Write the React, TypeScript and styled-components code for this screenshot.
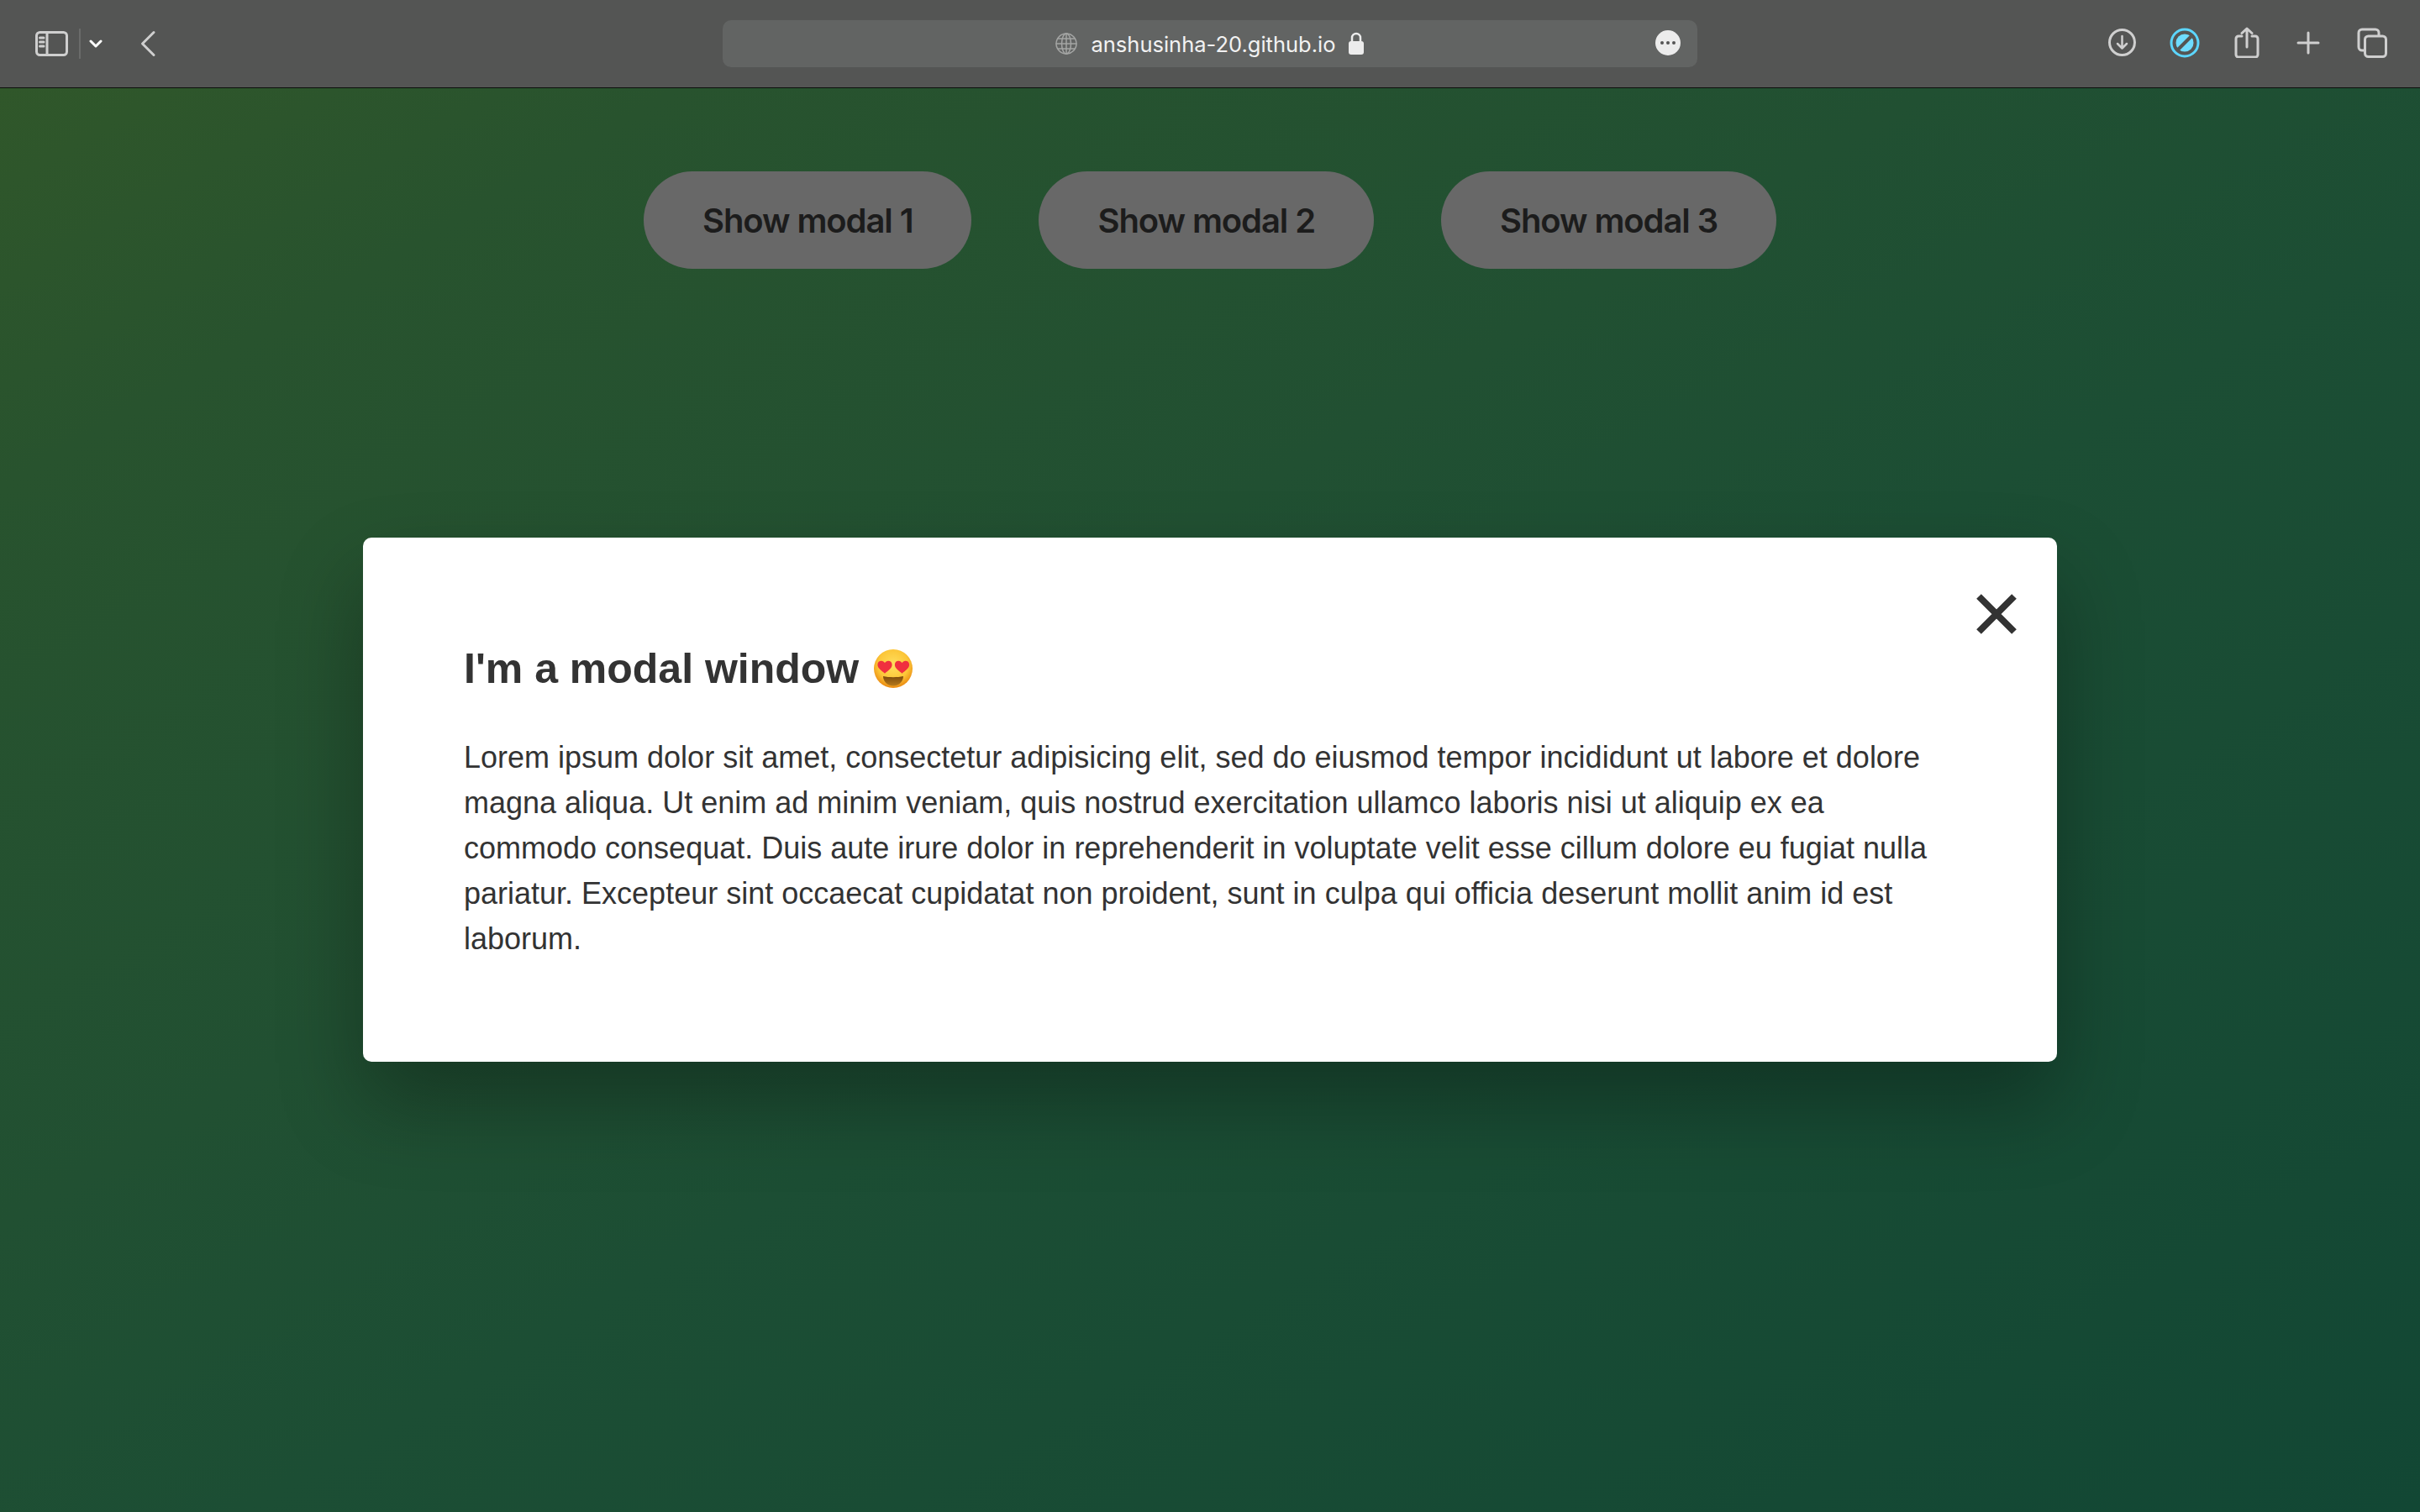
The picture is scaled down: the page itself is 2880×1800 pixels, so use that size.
import React from 'react';
import styled, { createGlobalStyle } from 'styled-components';

const GlobalStyle = createGlobalStyle`
  html, body {
    margin: 0;
    padding: 0;
    height: 100%;
  }
  #root {
    height: 100%;
  }
`;

const Window = styled.div`
  display: flex;
  flex-direction: column;
  width: 2880px;
  height: 1800px;
  overflow: hidden;
`;

const Toolbar = styled.header`
  display: grid;
  grid-template-columns: 1fr 1160px 1fr;
  align-items: center;
  height: 104px;
  background: #545554;
  border-bottom: 1px solid #0c0f0c;
  flex: none;
`;

const LeftTools = styled.div`
  display: flex;
  align-items: center;
  padding-left: 42px;
`;

const RightTools = styled.div`
  display: flex;
  align-items: center;
  justify-content: flex-end;
  gap: 42px;
  padding: 0 39px 3px 0;
`;

const ToolIcon = styled.svg<{ $stroke?: string; $weight?: number; $left?: number }>`
  display: block;
  flex: none;
  fill: none;
  margin-left: ${p => p.$left || 0}px;
  stroke: ${p => p.$stroke || '#cfcfcf'};
  stroke-width: ${p => p.$weight || 3};
  stroke-linecap: round;
  stroke-linejoin: round;
`;

const Divider = styled.span`
  width: 2px;
  height: 36px;
  margin: 0 10px 0 13px;
  background: #6a6b6a;
`;

const AddressBar = styled.div`
  position: relative;
  display: flex;
  align-items: center;
  justify-content: center;
  height: 56px;
  border-radius: 10px;
  background: #626463;
`;

const Url = styled.span`
  margin: 0 14px 0 16px;
  font-family: Inter, "Liberation Sans", sans-serif;
  font-size: 25.5px;
  font-weight: 400;
  color: #f2f2f2;
`;

const MoreBadge = styled.span`
  position: absolute;
  right: 20px;
  top: 12px;
  display: flex;
  align-items: center;
  justify-content: center;
  gap: 3px;
  width: 30px;
  height: 30px;
  border-radius: 50%;
  background: #ececec;
`;

const MoreDot = styled.i`
  width: 4px;
  height: 4px;
  border-radius: 50%;
  background: #555;
`;

const Page = styled.main`
  position: relative;
  flex: 1;
  display: flex;
  flex-direction: column;
  background: linear-gradient(to bottom right, #30572a 0%, #28532e 14%, #215032 40%, #1c4e34 55%, #124734 100%);
`;

const ButtonRow = styled.div`
  display: flex;
  justify-content: center;
  gap: 80px;
  padding-top: 99px;
`;

const PillButton = styled.button`
  height: 116px;
  padding: 0 70px;
  border: none;
  border-radius: 58px;
  background: #686868;
  color: #1c1c1c;
  font-family: Inter, "Liberation Sans", sans-serif;
  font-size: 40px;
  font-weight: 600;
  letter-spacing: -1.1px;
`;

const Overlay = styled.div`
  position: absolute;
  inset: 0;
  display: flex;
  align-items: center;
  justify-content: center;
  padding-bottom: 1px;
`;

const Modal = styled.section`
  position: relative;
  box-sizing: border-box;
  width: 2016px;
  height: 624px;
  padding: 126px 120px 0;
  background: #fff;
  border-radius: 10px;
  box-shadow: 0 50px 100px rgba(0, 0, 0, 0.3);
  font-family: "Liberation Sans", Arial, sans-serif;
`;

const CloseButton = styled.button`
  position: absolute;
  top: 67px;
  right: 48px;
  padding: 0;
  border: none;
  background: none;
`;

const CloseIcon = styled.svg`
  display: block;
  fill: none;
  stroke: #333;
  stroke-width: 8;
`;

const Title = styled.h2`
  display: flex;
  align-items: center;
  gap: 18px;
  margin: 0 0 49px;
  font-size: 50px;
  line-height: 60px;
  font-weight: 700;
  color: #333;
`;

const Body = styled.p`
  margin: 0;
  font-size: 36px;
  line-height: 54px;
  color: #333;
`;

function HeartEyes() {
  const heart = 'M0 -3.5c-1.6-3.6-8.2-3.2-8.2 1.8 0 4.4 5 7 8.2 10 3.2-3 8.2-5.6 8.2-10 0-5-6.6-5.4-8.2-1.8z';
  return (
    <svg width="46" height="46" viewBox="0 0 46 46">
      <defs>
        <radialGradient id="face" cx="50%" cy="40%" r="58%">
          <stop offset="0%" stopColor="#ffdf5e" />
          <stop offset="68%" stopColor="#fcc638" />
          <stop offset="100%" stopColor="#ec8f14" />
        </radialGradient>
        <linearGradient id="mouth" x1="0" y1="0" x2="0" y2="1">
          <stop offset="0%" stopColor="#7c4a0c" />
          <stop offset="100%" stopColor="#b67a1c" />
        </linearGradient>
      </defs>
      <circle cx="23" cy="23" r="23" fill="url(#face)" />
      <path d={heart} transform="translate(13 20) scale(1.05)" fill="#f0303f" />
      <path d={heart} transform="translate(33.5 20) scale(1.05)" fill="#f0303f" />
      <path d="M11 32c7 1.6 17 1.6 24 0 0 6-5 11.5-12 11.5S11 38 11 32z" fill="url(#mouth)" />
    </svg>
  );
}

export default function App() {
  return (
    <Window>
      <GlobalStyle />
      <Toolbar>
        <LeftTools>
          <ToolIcon width="39" height="30" viewBox="0 0 39 30">
            <rect x="1.5" y="1.5" width="36" height="27" rx="4" />
            <path d="M14 1.5v27" />
            <path d="M5.5 8h4.5M5.5 13h4.5M5.5 18h4.5" />
          </ToolIcon>
          <Divider />
          <ToolIcon width="16" height="10" viewBox="0 0 16 10" $stroke="#fff">
            <path d="M2 2l6 6 6-6" />
          </ToolIcon>
          <ToolIcon width="20" height="32" viewBox="0 0 20 32" $left={44}>
            <path d="M17 2.5L3.5 16 17 29.5" />
          </ToolIcon>
        </LeftTools>
        <AddressBar>
          <ToolIcon width="26" height="26" viewBox="0 0 26 26" $stroke="#a4a5a4" $weight={1.5}>
            <circle cx="13" cy="13" r="12" />
            <ellipse cx="13" cy="13" rx="5.5" ry="12" />
            <path d="M13 1v24M1 13h24M3 7h20M3 19h20" />
          </ToolIcon>
          <Url>anshusinha-20.github.io</Url>
          <svg width="20" height="28" viewBox="0 0 20 28">
            <path d="M5 13V7a5 5 0 0 1 10 0v6" fill="none" stroke="#ececec" strokeWidth="2.5" />
            <rect x="1" y="11" width="18" height="16" rx="3" fill="#ececec" />
          </svg>
          <MoreBadge>
            <MoreDot />
            <MoreDot />
            <MoreDot />
          </MoreBadge>
        </AddressBar>
        <RightTools>
          <ToolIcon width="33" height="33" viewBox="0 0 33 33">
            <circle cx="16.5" cy="16.5" r="15" />
            <path d="M16.5 9v14M11 18l5.5 5.5L22 18" strokeWidth="2.5" />
          </ToolIcon>
          <ToolIcon width="36" height="36" viewBox="0 0 36 36" $stroke="#5cd6ff" $left={-2}>
            <circle cx="18" cy="18" r="16" />
            <circle cx="18" cy="18" r="10.5" fill="#6fdcff" stroke="none" />
            <path d="M9 27L27 9" stroke="#545554" strokeWidth="4" strokeLinecap="butt" />
          </ToolIcon>
          <ToolIcon width="30" height="37" viewBox="0 0 30 37" $left={-1}>
            <path d="M9 11H5a3 3 0 0 0-3 3v19a3 3 0 0 0 3 3h20a3 3 0 0 0 3-3V14a3 3 0 0 0-3-3h-4" />
            <path d="M15 24V2M9 7.5L15 2l6 5.5" />
          </ToolIcon>
          <ToolIcon width="28" height="28" viewBox="0 0 28 28" $left={2}>
            <path d="M14 2v24M2 14h24" />
          </ToolIcon>
          <ToolIcon width="36" height="36" viewBox="0 0 36 36" $left={2}>
            <path d="M8 27H6a4 4 0 0 1-4-4V6a4 4 0 0 1 4-4h16a4 4 0 0 1 4 4v3" />
            <rect x="9.5" y="10" width="25" height="24.5" rx="4" />
          </ToolIcon>
        </RightTools>
      </Toolbar>
      <Page>
        <ButtonRow>
          <PillButton>Show modal 1</PillButton>
          <PillButton>Show modal 2</PillButton>
          <PillButton>Show modal 3</PillButton>
        </ButtonRow>
        <Overlay>
          <Modal>
            <CloseButton aria-label="Close">
              <CloseIcon width="48" height="48" viewBox="0 0 48 48">
                <path d="M3 3l42 42M45 3L3 45" />
              </CloseIcon>
            </CloseButton>
            <Title>
              I'm a modal window <HeartEyes />
            </Title>
            <Body>
              Lorem ipsum dolor sit amet, consectetur adipisicing elit, sed do eiusmod tempor incididunt ut
              labore et dolore magna aliqua. Ut enim ad minim veniam, quis nostrud exercitation ullamco
              laboris nisi ut aliquip ex ea commodo consequat. Duis aute irure dolor in reprehenderit in
              voluptate velit esse cillum dolore eu fugiat nulla pariatur. Excepteur sint occaecat cupidatat
              non proident, sunt in culpa qui officia deserunt mollit anim id est laborum.
            </Body>
          </Modal>
        </Overlay>
      </Page>
    </Window>
  );
}
